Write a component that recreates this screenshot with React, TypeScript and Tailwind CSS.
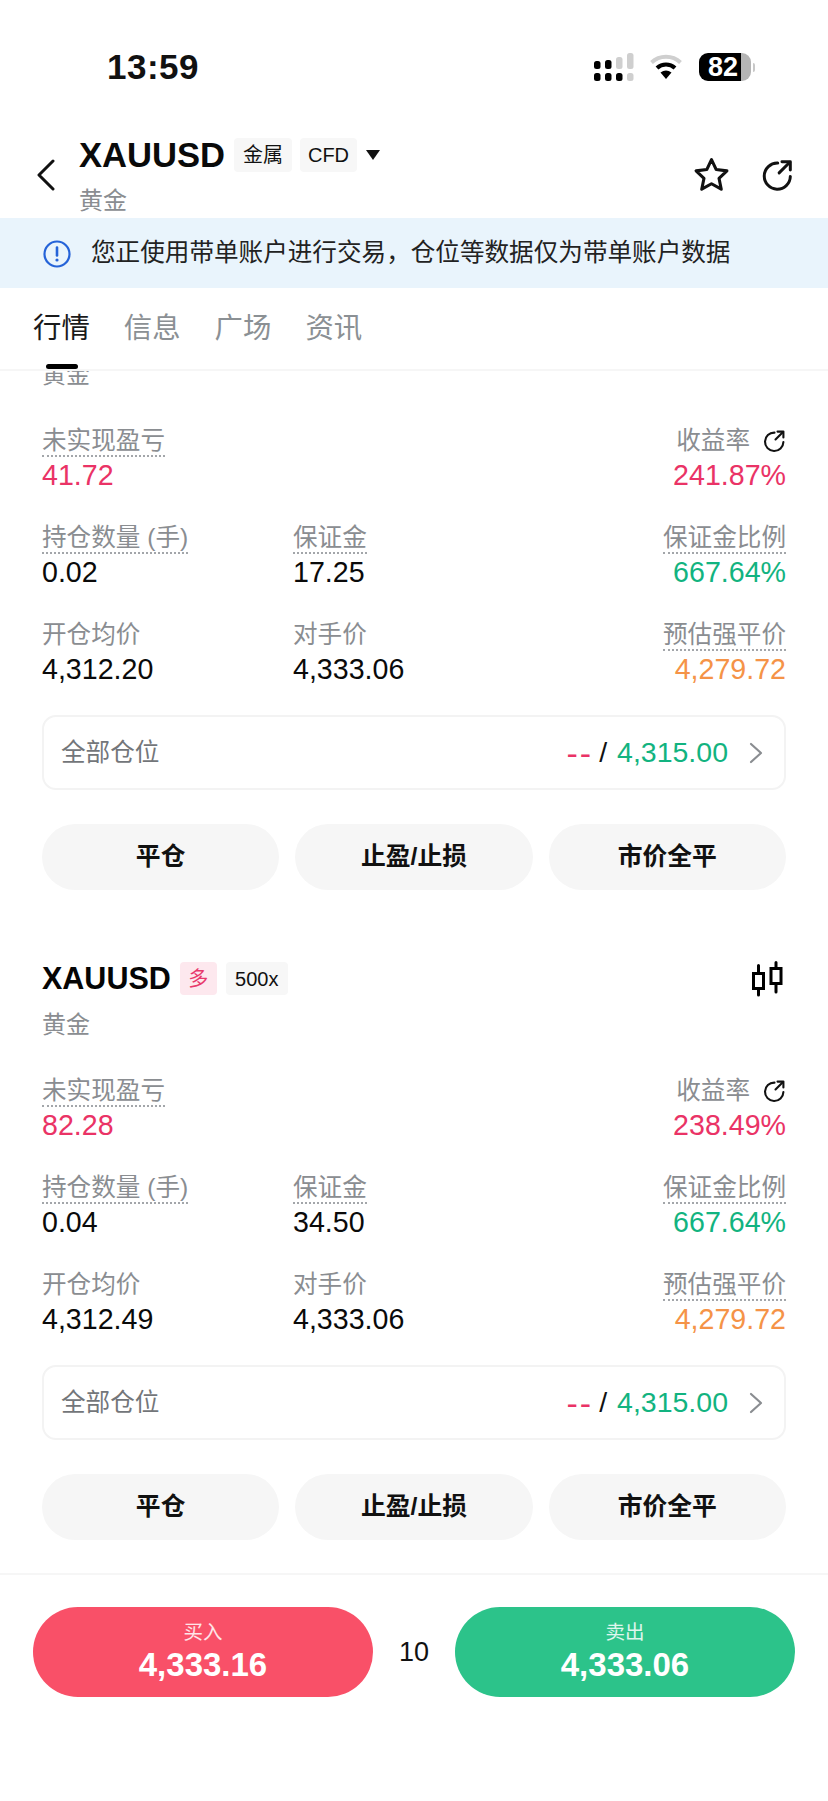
import React from "react";

const ShareIcon = ({ size, className }: { size: number; className?: string }) => (
  <svg width={size} height={size} viewBox="0 0 24 24" fill="none" stroke="currentColor" strokeWidth="2.1" strokeLinecap="round" strokeLinejoin="round" className={className}>
    <path d="M12.5 3.6A9.2 9.2 0 1 0 21.4 13" />
    <path d="M13.5 10.5L21 3" />
    <path d="M15.5 2.6H21.4V8.5" />
  </svg>
);

const CandleIcon = () => (
  <svg width="32" height="36" viewBox="0 0 32 36" fill="none" stroke="#000" strokeWidth="3" strokeLinecap="round">
    <rect x="2.5" y="12.5" width="10" height="15" />
    <path d="M7.5 4.5V12M7.5 28V34" />
    <rect x="20" y="7.5" width="10" height="15" />
    <path d="M25 1.5V7M25 23V31" />
  </svg>
);

const SignalIcon = () => (
  <svg width="40" height="28" viewBox="0 0 40 28">
    <rect x="0" y="8" width="6.5" height="8" rx="2.5" fill="#000" />
    <rect x="11" y="7" width="6.5" height="9" rx="2.5" fill="#000" />
    <rect x="22" y="4" width="6.5" height="12" rx="2.5" fill="#cfcfcf" />
    <rect x="33" y="0" width="6.5" height="16" rx="2.5" fill="#cfcfcf" />
    <rect x="0" y="20" width="6.5" height="8" rx="2.5" fill="#000" />
    <rect x="11" y="20" width="6.5" height="8" rx="2.5" fill="#000" />
    <rect x="22" y="20" width="6.5" height="8" rx="2.5" fill="#000" />
    <rect x="33" y="20" width="6.5" height="8" rx="2.5" fill="#cfcfcf" />
  </svg>
);

const WifiIcon = () => (
  <svg width="34" height="26" viewBox="0 0 34 26" fill="none">
    <path d="M2.5 8.5A21 21 0 0 1 31.5 8.5" stroke="#cfcfcf" strokeWidth="4" />
    <path d="M8 14A13 13 0 0 1 26 14" stroke="#000" strokeWidth="4" />
    <path d="M11.5 18.5Q17 14.5 22.5 18.5L17 25Z" fill="#000" />
  </svg>
);

type Cell = { label: string; value: string; color?: string; dotted?: boolean; share?: boolean };

const Stat = ({ cell, right }: { cell: Cell; right?: boolean }) => (
  <div className={`flex flex-col ${right ? "items-end" : "items-start"}`}>
    <div className="h-[32px] flex items-center">
      <span className={`h-[32px] leading-[32px] text-[24.6px] text-[#8a8d91] ${cell.dotted === false ? "" : "border-b-2 border-dotted border-[#a3a6aa]"}`}>
        {cell.label}
      </span>
      {cell.share && <ShareIcon size={24} className="ml-[12px] text-[#111]" />}
    </div>
    <div className={`h-[36px] leading-[36px] text-[28.6px] ${cell.color ?? "text-[#0a0a0a]"}`}>{cell.value}</div>
  </div>
);

// the first card is scrolled under the tabs, only the bottom of its subtitle still shows
const PositionCard = ({ pnl, rate, qty, margin, open, scrolled }: { pnl: string; rate: string; qty: string; margin: string; open: string; scrolled?: boolean }) => (
  <div className="px-[42px]">
    {!scrolled && (
      <div className="h-[33px] mb-[13px] flex items-center">
        <span className="text-[30.5px] font-bold text-[#050505] leading-none">XAUUSD</span>
        <span className="ml-[9px] w-[37px] h-[33px] rounded-[4px] bg-[#fde8ee] flex items-center justify-center text-[20px] text-[#e8396c]">多</span>
        <span className="ml-[9px] w-[62px] h-[33px] rounded-[4px] bg-[#f7f7f7] flex items-center justify-center text-[20px] text-[#111]">500x</span>
        <span className="ml-auto mr-[3px] flex">
          <CandleIcon />
        </span>
      </div>
    )}
    <div className="h-[34px] leading-[34px] text-[24px] text-[#8a8d91]">黄金</div>

    <div className="mt-[33px] grid grid-cols-[251px_1fr_auto] gap-y-[29px]">
      <Stat cell={{ label: "未实现盈亏", value: pnl, color: "text-[#ea3366]" }} />
      <div />
      <Stat right cell={{ label: "收益率", value: rate, color: "text-[#ea3366]", dotted: false, share: true }} />
      <Stat cell={{ label: "持仓数量 (手)", value: qty }} />
      <Stat cell={{ label: "保证金", value: margin }} />
      <Stat right cell={{ label: "保证金比例", value: "667.64%", color: "text-[#12b380]" }} />
      <Stat cell={{ label: "开仓均价", value: open, dotted: false }} />
      <Stat cell={{ label: "对手价", value: "4,333.06", dotted: false }} />
      <Stat right cell={{ label: "预估强平价", value: "4,279.72", color: "text-[#f59347]" }} />
    </div>

    <div className="mt-[28px] h-[75px] rounded-[14px] border-2 border-[#f3f3f3] flex items-center pl-[17px] pr-[21px]">
      <span className="pt-[2px] text-[24.6px] text-[#73767a]">全部仓位</span>
      <span className="ml-auto text-[34px] leading-none tracking-[2px] text-[#ea3366]">--</span>
      <span className="ml-[6px] text-[28.5px] text-[#111]">/</span>
      <span className="ml-[10px] text-[28.5px] text-[#12b380]">4,315.00</span>
      <svg width="14" height="24" viewBox="0 0 14 24" fill="none" stroke="#8a8d91" strokeWidth="2.2" strokeLinecap="round" strokeLinejoin="round" className="ml-[21px]">
        <path d="M2 3l10 9-10 9" />
      </svg>
    </div>

    <div className="mt-[34px] grid grid-cols-3 gap-x-[16px]">
      {["平仓", "止盈/止损", "市价全平"].map((t) => (
        <div key={t} className="h-[66px] rounded-full bg-[#f6f6f6] flex items-center justify-center text-[24.8px] font-semibold text-[#111]">
          {t}
        </div>
      ))}
    </div>
  </div>
);

export default function App() {
  return (
    <div className="w-[828px] h-[1801px] bg-white flex flex-col overflow-hidden font-['Liberation_Sans','Noto_Sans_CJK_SC',sans-serif]">
      {/* status bar */}
      <div className="h-[128px] pt-[6px] pl-[107px] pr-[73px] flex items-center">
        <span className="text-[35px] font-bold text-[#111] tracking-[0.5px]">13:59</span>
        <div className="ml-auto flex items-center">
          <SignalIcon />
          <span className="ml-[15px] flex">
            <WifiIcon />
          </span>
          <div className="ml-[16px] h-[28px] flex items-center">
            <div className="w-[42px] h-[28px] bg-black rounded-l-[9px] text-white text-[27px] font-bold leading-[28px] pl-[9px]">82</div>
            <div className="w-[10px] h-[28px] bg-[#b5b5b5] rounded-r-[9px]" />
            <div className="ml-[2px] w-[2px] h-[9px] bg-[#c8c8c8] rounded-r-[2px]" />
          </div>
        </div>
      </div>

      {/* header */}
      <div className="h-[90px] flex items-start pl-[37px] pr-[34px]">
        <svg width="18" height="32" viewBox="0 0 18 32" fill="none" stroke="#111" strokeWidth="3" strokeLinecap="round" strokeLinejoin="round" className="mt-[31px]">
          <path d="M16 2L2 16l14 14" />
        </svg>
        <div className="ml-[24px] pt-[10px]">
          <div className="h-[34px] flex items-center">
            <span className="text-[34.6px] font-bold text-[#0a0a0a] leading-none">XAUUSD</span>
            <span className="ml-[9px] w-[58px] h-[34px] rounded-[4px] bg-[#f7f7f7] flex items-center justify-center text-[20px] text-[#111]">金属</span>
            <span className="ml-[8px] w-[57px] h-[34px] rounded-[4px] bg-[#f7f7f7] flex items-center justify-center text-[20px] text-[#111]">CFD</span>
            <svg width="14" height="10" viewBox="0 0 14 10" className="ml-[9px]">
              <path d="M0 0h14L7 10z" fill="#111" />
            </svg>
          </div>
          <div className="mt-[12px] h-[34px] leading-[34px] text-[24px] text-[#8a8d91]">黄金</div>
        </div>
        <div className="ml-auto mt-[28px] flex items-center">
          <svg width="37" height="37" viewBox="0 0 36 36" fill="none" stroke="#111" strokeWidth="3" strokeLinejoin="round">
            <path d="M18 3.5l4.6 9.7 10.4 1.3-7.7 7.2 2.2 10.6L18 27l-9.5 5.3 2.2-10.6L3 14.5l10.4-1.3z" />
          </svg>
          <ShareIcon size={34} className="ml-[30px] text-[#111]" />
        </div>
      </div>

      {/* copy-trade banner */}
      <div className="h-[70px] bg-[#e9f4fc] flex items-center pl-[43px] pt-[1px]">
        <svg width="28" height="28" viewBox="0 0 28 28" fill="none">
          <circle cx="14" cy="14" r="12.5" stroke="#2563d8" strokeWidth="2.2" />
          <path d="M14 7.5v8" stroke="#2563d8" strokeWidth="2.6" strokeLinecap="round" />
          <circle cx="14" cy="20" r="1.6" fill="#2563d8" />
        </svg>
        <span className="ml-[20px] text-[24.6px] text-[#222]">您正使用带单账户进行交易，仓位等数据仅为带单账户数据</span>
      </div>

      {/* tabs */}
      <div className="relative z-10 h-[83px] bg-white border-b-2 border-[#f6f6f6] flex items-center gap-x-[34px] pl-[33px]">
        {["行情", "信息", "广场", "资讯"].map((t, i) => (
          <span key={t} className={`text-[28.4px] ${i === 0 ? "text-[#1a1a1a]" : "text-[#8b9094]"}`}>
            {t}
          </span>
        ))}
        <div className="absolute left-[46px] bottom-0 w-[32px] h-[5px] rounded-full bg-black" />
      </div>

      {/* scrolled positions */}
      <div className="flex-1 min-h-0 overflow-hidden">
        <div className="-mt-[13px] flex flex-col gap-y-[72px]">
          <PositionCard scrolled pnl="41.72" rate="241.87%" qty="0.02" margin="17.25" open="4,312.20" />
          <PositionCard pnl="82.28" rate="238.49%" qty="0.04" margin="34.50" open="4,312.49" />
        </div>
      </div>

      {/* buy / sell */}
      <div className="h-[228px] border-t-2 border-[#f6f6f6] pt-[32px] px-[33px] flex items-start">
        <div className="w-[340px] h-[90px] rounded-full bg-[#f95068] flex flex-col items-center justify-center text-white">
          <span className="text-[19.5px] leading-[26px] text-white/85">买入</span>
          <span className="text-[33px] font-semibold leading-[40px]">4,333.16</span>
        </div>
        <span className="w-[82px] h-[90px] flex items-center justify-center text-[27px] text-[#111]">10</span>
        <div className="w-[340px] h-[90px] rounded-full bg-[#2cc38a] flex flex-col items-center justify-center text-white">
          <span className="text-[19.5px] leading-[26px] text-white/85">卖出</span>
          <span className="text-[33px] font-semibold leading-[40px]">4,333.06</span>
        </div>
      </div>
    </div>
  );
}
